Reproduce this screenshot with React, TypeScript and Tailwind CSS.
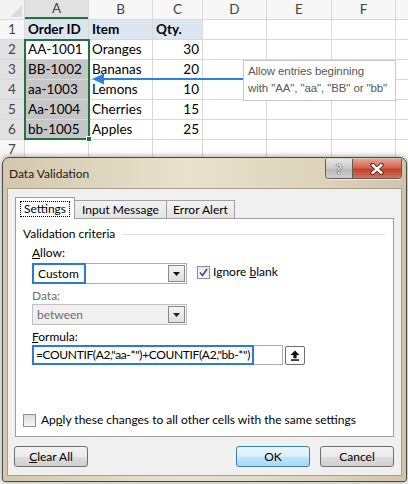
import React from "react";

const rows: string[][] = [
  ["Order ID", "Item", "Qty."],
  ["AA-1001", "Oranges", "30"],
  ["BB-1002", "Bananas", "20"],
  ["aa-1003", "Lemons", "10"],
  ["Aa-1004", "Cherries", "15"],
  ["bb-1005", "Apples", "25"],
  ["", "", ""],
];

const colLetters = ["A", "B", "C", "D", "E", "F", ""];

const DropButton = ({ disabled }: { disabled?: boolean }) => (
  <div className="absolute right-px top-px bottom-px w-[17px] border border-[#8a8a8a] bg-[linear-gradient(#f4f4f4,#dedede)] flex items-center justify-center">
    <svg width="7" height="4" viewBox="0 0 7 4">
      <path d="M0 0h7L3.5 4z" fill={disabled ? "#222" : "#111"} />
    </svg>
  </div>
);

const Sheet = () => (
  <div className="grid grid-cols-[24px_63px_63px_49px_63px_64px_63px_1fr] auto-rows-[19px] gap-px bg-[#d9d9d9] font-['Lato','Liberation_Sans',sans-serif] text-[13.5px] text-black">
    <div className="bg-[#f3f3f3] relative overflow-hidden">
      <svg className="absolute right-[2px] bottom-[2px]" width="12" height="12" viewBox="0 0 12 12">
        <path d="M12 0v12H0z" fill="#dcdcdc" />
      </svg>
    </div>
    {colLetters.map((c, i) => (
      <div
        key={"h" + i}
        className={
          i === 0
            ? "bg-[#e1e1e1] border-b-2 border-[#217346] flex items-center justify-center text-[#444]"
            : "bg-[#f7f7f7] flex items-center justify-center text-[#444]"
        }
      >
        {c}
      </div>
    ))}
    {rows.map((r, ri) => (
      <React.Fragment key={"r" + ri}>
        <div
          className={
            (ri >= 1 && ri <= 5 ? "bg-[#e1e1e1] " : "bg-[#f7f7f7] ") +
            "flex items-center justify-center text-[#444]"
          }
        >
          {ri + 1}
        </div>
        {r.map((v, ci) => {
          const head = ri === 0;
          const sel = ci === 0 && ri >= 2 && ri <= 5;
          return (
            <div
              key={ci}
              className={
                (head ? "bg-[#dce6f1] font-bold " : sel ? "bg-[#c6c6c6] " : "bg-white ") +
                "flex items-center px-[3px] " +
                (ci === 2 && !head ? "justify-end" : "")
              }
            >
              {v}
            </div>
          );
        })}
        {[0, 1, 2, 3].map((k) => (
          <div key={"e" + k} className="bg-white" />
        ))}
      </React.Fragment>
    ))}
  </div>
);

const Dialog = () => (
  <div className="absolute left-[2px] top-[157px] w-[405px] h-[325px] rounded-t-[7px] rounded-b-[3px] border border-[#4a4a4a] bg-[linear-gradient(90deg,#d3c8ac,#e9e1cd_45%,#ddd3ba_80%,#cfc4a8)] flex flex-col font-['Lato',sans-serif] text-[12px] text-black shadow-[0_0_6px_rgba(0,0,0,0.45)]">
    <div className="h-[30px] flex items-start relative">
      <div className="pl-[6px] pt-[8px] text-[12px] leading-[16px] text-[#1a1a1a]">Data Validation</div>
      <div className="ml-auto mr-[4px] flex h-[20px] mt-[1px] rounded-b-[4px] overflow-hidden border border-t-0 border-[#5d5d5d] shadow-[0_1px_0_rgba(255,255,255,0.6)]">
        <div className="w-[27px] h-full border-r border-[#5d5d5d] bg-[linear-gradient(#e6e6e6,#c9c9c9_50%,#b7b7b7_51%,#cfcfcf)] flex items-center justify-center">
          <span className="font-bold text-[14px] leading-none text-[#f2f2f2] [text-shadow:0_0_1px_#222,0_0_1px_#222]">?</span>
        </div>
        <div className="w-[48px] h-full bg-[linear-gradient(#e8a293,#d3654f_45%,#c2432d_55%,#d7705c)] flex items-center justify-center">
          <svg width="14" height="12" viewBox="0 0 14 12">
            <path d="M2.5 2l9 8M11.5 2l-9 8" stroke="#4a1e16" strokeWidth="4.2" strokeLinecap="round" />
            <path d="M2.5 2l9 8M11.5 2l-9 8" stroke="#ffffff" strokeWidth="2.4" strokeLinecap="round" />
          </svg>
        </div>
      </div>
    </div>
    <div className="mx-[4px] mb-[5px] flex-1 bg-[#f0f0f0] border border-[#a79f88] flex flex-col px-[7px] pt-[8px]">
      <div className="flex items-end h-[21px] relative z-10">
        <div className="h-[22px] w-[60px] bg-white border border-b-0 border-[#a0a0a0] flex items-center justify-center mb-[-1px]">
          <span className="border border-dotted border-black px-[3px] leading-[14px]">Settings</span>
        </div>
        <div className="h-[18px] w-[92px] border border-b-0 border-l-0 border-[#a0a0a0] bg-[linear-gradient(#f3f3f3,#e3e3e3)] flex items-center justify-center">
          Input Message
        </div>
        <div className="h-[18px] w-[68px] border border-b-0 border-l-0 border-[#a0a0a0] bg-[linear-gradient(#f3f3f3,#e3e3e3)] flex items-center justify-center">
          Error Alert
        </div>
      </div>
      <div className="h-[219px] bg-white border border-[#a0a0a0] flex flex-col px-[7px] pt-[7px]">
        <div className="flex items-center gap-[7px] h-[16px]">
          <span>Validation criteria</span>
          <div className="flex-1 mr-[1px] h-px bg-[#d5dfe5]" />
        </div>
        <div className="pl-[9px] flex flex-col">
          <div className="mt-[3px] h-[16px] leading-[16px]">
            <span className="underline">A</span>llow:
          </div>
          <div className="mt-[2px] flex items-center">
            <div className="relative w-[155px] h-[21px] border border-[#abadb3] bg-white">
              <div className="absolute left-[-1px] top-[-1px] w-[54px] h-[21px] border-2 border-[#2b7bd6] flex items-center pl-[4px]">
                Custom
              </div>
              <DropButton />
            </div>
            <div className="ml-[10px] flex items-center gap-[3px] mb-[3px]">
              <div className="w-[13px] h-[13px] border border-[#8f8f8f] bg-[linear-gradient(#e9e9ef,#f7f7f9)] flex items-center justify-center">
                <svg width="9" height="9" viewBox="0 0 9 9">
                  <path d="M1 4.5l2.5 3L8 1" fill="none" stroke="#3c4c8a" strokeWidth="1.6" />
                </svg>
              </div>
              <span>
                Ignore <span className="underline">b</span>lank
              </span>
            </div>
          </div>
          <div className="mt-[4px] h-[16px] leading-[16px] text-[#6d6d6d]">Data:</div>
          <div className="relative w-[155px] h-[21px] border border-[#c2c2c2] bg-[#f0f0f0] flex items-center pl-[4px] text-[#6d6d6d]">
            between
            <DropButton disabled />
          </div>
          <div className="mt-[4px] h-[16px] leading-[16px]">
            <span className="underline">F</span>ormula:
          </div>
          <div className="flex items-center">
            <div className="relative w-[251px] h-[20px] border border-[#abadb3] bg-white">
              <div className="absolute left-[-1px] top-[-1px] w-[222px] h-[20px] border-2 border-[#2b7bd6] flex items-center pl-[2px] whitespace-nowrap tracking-[-0.35px]">
                =COUNTIF(A2,"aa-*")+COUNTIF(A2,"bb-*")
              </div>
            </div>
            <div className="ml-[2px] w-[20px] h-[19px] border border-[#707070] bg-white rounded-[2px] flex items-center justify-center">
              <svg width="10" height="11" viewBox="0 0 10 11">
                <path d="M5 0.5L9.5 5H6.6v3.2H3.4V5H0.5z" fill="#111" />
                <rect x="1" y="9.3" width="8" height="1.5" fill="#111" />
              </svg>
            </div>
          </div>
        </div>
        <div className="mt-auto mb-[7px] flex items-center gap-[5px]">
          <div className="w-[13px] h-[13px] border border-[#8f8f8f] bg-[linear-gradient(#dcdcdc,#f6f6f6)]" />
          <span>
            Ap<span className="underline">p</span>ly these changes to all other cells with the same settings
          </span>
        </div>
      </div>
      <div className="mt-[9px] flex items-center">
        <button className="w-[74px] h-[21px] rounded-[3px] border border-[#707070] bg-[linear-gradient(#f2f2f2,#ebebeb_50%,#dddddd_51%,#cfcfcf)] ml-[-1px]">
          <span className="underline">C</span>lear All
        </button>
        <button className="ml-auto w-[74px] h-[21px] rounded-[3px] border border-[#3c7fb1] bg-[linear-gradient(#eaf6fd,#d9f0fc_50%,#bee6fd_51%,#a7d9f5)]">
          OK
        </button>
        <button className="ml-[10px] w-[74px] h-[21px] rounded-[3px] border border-[#707070] bg-[linear-gradient(#f2f2f2,#ebebeb_50%,#dddddd_51%,#cfcfcf)]">
          Cancel
        </button>
      </div>
    </div>
  </div>
);

export default function App() {
  return (
    <div className="relative w-[408px] h-[484px] overflow-hidden bg-white">
      <Sheet />
      {/* selection box over A2:A6 */}
      <div className="absolute left-[24px] top-[39px] w-[66px] h-[101px] border-2 border-[#217346]">
        <div className="absolute right-[-4px] bottom-[-4px] w-[6px] h-[6px] bg-[#217346] border border-white" />
      </div>
      {/* arrow to callout */}
      <svg className="absolute left-[90px] top-[72px]" width="154" height="14" viewBox="0 0 154 14">
        <path d="M8 7H154" stroke="#2d7fe0" strokeWidth="2" />
        <path d="M2 7L14 1.5V12.5z" fill="#2d7fe0" />
      </svg>
      <div className="absolute left-[243px] top-[60px] w-[153px] h-[41px] bg-white border border-[#c8c8c8] font-['Liberation_Sans',Arial,sans-serif] text-[11.5px] leading-[17px] text-[#595959] pl-[4px] pt-[2px] whitespace-nowrap tracking-[-0.1px]">
        Allow entries beginning
        <br />
        with "AA", "aa", "BB" or "bb"
      </div>
      <Dialog />
    </div>
  );
}
